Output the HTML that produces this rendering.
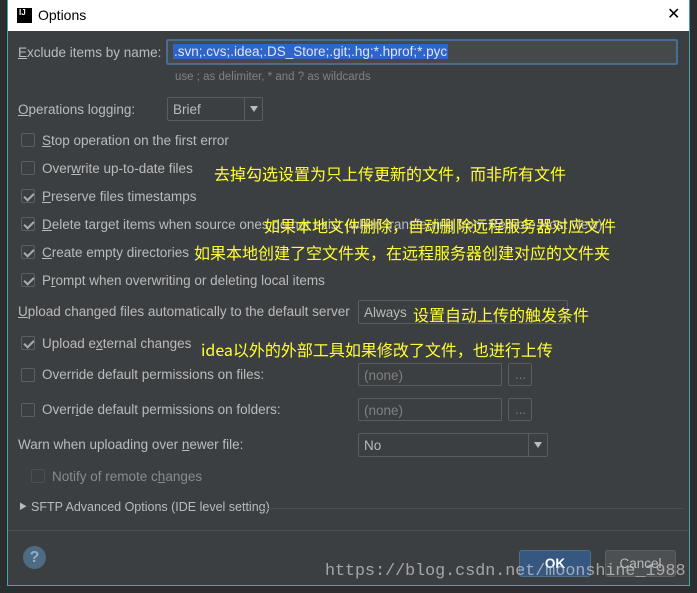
<!DOCTYPE html>
<html><head><meta charset="utf-8"><style>
*{margin:0;padding:0;box-sizing:border-box}
body{width:697px;height:593px;background:#2b2d2e;position:relative;overflow:hidden;font-family:"Liberation Sans","Noto Sans CJK SC",sans-serif;font-size:13.5px;color:#bbbbbb}
.dlg{position:absolute;left:7px;top:0;width:683px;height:586px;background:#3c3f41;border:1px solid #3fa9a9;border-top:none}
.title{position:absolute;left:0;top:0;width:681px;height:31px;background:#fff;color:#000;font-size:14px}
.a{position:absolute;white-space:nowrap}
.cb{position:absolute;width:14px;height:14px;border:1px solid #5c5f61;background:#3c3f41;border-radius:2px}
.cb.on::after{content:"";position:absolute;left:4px;top:1px;width:4px;height:8px;border:solid #a9abad;border-width:0 2px 2px 0;transform:rotate(45deg)}
.box{position:absolute;border:1px solid #5a5d5f;background:#3c3f41;border-radius:2px}
.y{position:absolute;color:#ffff33;font-size:16px;white-space:nowrap;font-family:"Noto Sans CJK SC",sans-serif}
u{text-decoration:underline}
.arr{position:absolute;width:0;height:0;border-left:4px solid transparent;border-right:4px solid transparent;border-top:6px solid #bbb}
</style></head><body>
<div class="dlg">
<div class="title"><div class="a" style="left:9px;top:8px;width:15px;height:15px;background:#000;color:#fff;font-size:8px;font-weight:bold;line-height:10px;padding-left:2px">IJ</div><div class="a" style="left:30px;top:7px">Options</div><div class="a" style="left:659px;top:4px;font-size:16px">✕</div></div>
<div class="a" style="left:10px;top:45px"><u>E</u>xclude items by name:</div>
<div class="box" style="left:158px;top:39px;width:512px;height:26px;border:2px solid #466d94;background:#45494a"></div>
<div class="a" style="left:165px;top:44px;background:#2f65ca;color:#dfe6f0;padding:0 1px">.svn;.cvs;.idea;.DS_Store;.git;.hg;*.hprof;*.pyc</div>
<div class="a" style="left:167px;top:71px;font-size:11.5px;color:#808080">use ; as delimiter, * and ? as wildcards</div>
<div class="a" style="left:10px;top:102px"><u>O</u>perations logging:</div>
<div class="box" style="left:159px;top:97px;width:96px;height:24px"></div><div class="a" style="left:165px;top:102px">Brief</div><div class="a" style="left:236px;top:98px;width:1px;height:22px;background:#5a5d5f"></div><div class="arr" style="left:242px;top:106px"></div>
<div class="cb" style="left:13px;top:133px"></div><div class="a" style="left:34px;top:133px"><u>S</u>top operation on the first error</div>
<div class="cb" style="left:13px;top:161px"></div><div class="a" style="left:34px;top:161px">Over<u>w</u>rite up-to-date files</div>
<div class="cb on" style="left:13px;top:189px"></div><div class="a" style="left:34px;top:189px"><u>P</u>reserve files timestamps</div>
<div class="cb on" style="left:13px;top:217px"></div><div class="a" style="left:34px;top:217px"><u>D</u>elete target items when source ones do not exist (when transferring from Remote Host view)</div>
<div class="cb on" style="left:13px;top:245px"></div><div class="a" style="left:34px;top:245px"><u>C</u>reate empty directories</div>
<div class="cb on" style="left:13px;top:273px"></div><div class="a" style="left:34px;top:273px">P<u>r</u>ompt when overwriting or deleting local items</div>
<div class="a" style="left:10px;top:304px"><u>U</u>pload changed files automatically to the default server</div>
<div class="box" style="left:350px;top:300px;width:210px;height:24px"></div><div class="a" style="left:356px;top:305px">Always</div>
<div class="cb on" style="left:13px;top:336px"></div><div class="a" style="left:34px;top:336px">Upload e<u>x</u>ternal changes</div>
<div class="cb" style="left:13px;top:368px"></div><div class="a" style="left:34px;top:367px">Override default permissions on files:</div>
<div class="box" style="left:350px;top:363px;width:144px;height:23px"></div><div class="a" style="left:356px;top:368px;color:#808080">(none)</div><div class="box" style="left:500px;top:363px;width:24px;height:23px"></div><div class="a" style="left:507px;top:367px;color:#777">...</div>
<div class="cb" style="left:13px;top:403px"></div><div class="a" style="left:34px;top:402px">Overr<u>i</u>de default permissions on folders:</div>
<div class="box" style="left:350px;top:398px;width:144px;height:23px"></div><div class="a" style="left:356px;top:403px;color:#808080">(none)</div><div class="box" style="left:500px;top:398px;width:24px;height:23px"></div><div class="a" style="left:507px;top:402px;color:#777">...</div>
<div class="a" style="left:10px;top:437px">Warn when uploading over <u>n</u>ewer file:</div>
<div class="box" style="left:350px;top:433px;width:190px;height:24px"></div><div class="a" style="left:356px;top:438px">No</div><div class="a" style="left:520px;top:434px;width:1px;height:22px;background:#5a5d5f"></div><div class="arr" style="left:526px;top:442px"></div>
<div class="cb" style="left:23px;top:469px;border-color:#4d5052"></div><div class="a" style="left:44px;top:469px;color:#8a8a8a">Notify of remote c<u>h</u>anges</div>
<div class="a" style="left:11px;top:501px;font-size:8px">▶</div><div class="a" style="left:23px;top:500px;font-size:12.5px">SFTP Advanced Options (IDE level setting)</div><div class="a" style="left:252px;top:508px;width:424px;height:1px;background:#4a4d4f"></div>
<div class="a" style="left:0;top:530px;width:681px;height:1px;background:#4a4d4f"></div>
<div class="a" style="left:15px;top:546px;width:23px;height:23px;border-radius:50%;background:#4f6b84;color:#8fb0cc;font-weight:bold;font-size:16px;text-align:center;line-height:23px">?</div>
<div class="a" style="left:511px;top:550px;width:72px;height:27px;background:#365880;border:1px solid #4c708c;border-radius:3px;color:#fff;font-weight:bold;text-align:center;line-height:25px">OK</div>
<div class="a" style="left:597px;top:550px;width:71px;height:27px;background:#4c5052;border:1px solid #5e6060;border-radius:3px;text-align:center;line-height:25px">Cancel</div>
</div>
<div class="y" style="left:214px;top:161px">去掉勾选设置为只上传更新的文件，而非所有文件</div>
<div class="y" style="left:264px;top:213px">如果本地文件删除，自动删除远程服务器对应文件</div>
<div class="y" style="left:194px;top:240px">如果本地创建了空文件夹，在远程服务器创建对应的文件夹</div>
<div class="y" style="left:413px;top:302px">设置自动上传的触发条件</div>
<div class="y" style="left:201px;top:337px">idea以外的外部工具如果修改了文件，也进行上传</div>
<div class="a" style="left:325px;top:562px;font-family:'Liberation Mono',monospace;font-size:16.7px;color:rgba(200,200,200,0.75)">https://blog.csdn.net/moonshine_1988</div>
</body></html>
